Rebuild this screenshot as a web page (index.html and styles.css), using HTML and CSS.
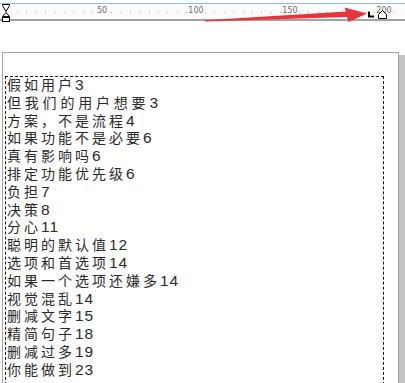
FILE: index.html
```html
<!DOCTYPE html>
<html>
<head>
<meta charset="utf-8">
<link rel="stylesheet" href="styles.css">
</head>
<body>
<div class="ruler">
  <svg class="indent" width="10" height="19" viewBox="0 0 10 19">
    <path d="M1.5 0.5 H8.5 V1.5 L5 7.5 L1.5 1.5 Z" fill="#fff" stroke="#000"/>
    <path d="M5 8.5 L8.5 12.5 H1.5 Z" fill="#fff" stroke="#000"/>
    <rect x="1.5" y="13.5" width="7" height="4" fill="#fff" stroke="#000"/>
  </svg>
  <div class="scale">
    <div class="seg"><span class="num">50</span></div>
    <div class="seg"><span class="num">100</span></div>
    <div class="seg"><span class="num">150</span></div>
    <div class="seg"><span class="num">200</span></div>
  </div>
  <svg class="marks" width="405" height="24" viewBox="0 0 405 24">
    <polygon points="205,20.3 346,11.6 344.5,7.5 367,13.6 348.5,22 347,17 205,21.6" fill="#e8343a"/>
    <path d="M369 11.5 V16.5 H374" fill="none" stroke="#000" stroke-width="2"/>
    <path d="M378.5 18.5 V14.5 L382.5 10.5 L386.5 14.5 V18.5 Z" fill="#fff" stroke="#000"/>
  </svg>
</div>
<div class="page">
  <div class="textbox">
    <p class="line">假如用户<span class="pg">3</span></p>
    <p class="line wide">但我们的用户想要<span class="pg">3</span></p>
    <p class="line">方案，不是流程<span class="pg">4</span></p>
    <p class="line">如果功能不是必要<span class="pg">6</span></p>
    <p class="line">真有影响吗<span class="pg">6</span></p>
    <p class="line">排定功能优先级<span class="pg">6</span></p>
    <p class="line">负担<span class="pg">7</span></p>
    <p class="line">决策<span class="pg">8</span></p>
    <p class="line">分心<span class="pg">11</span></p>
    <p class="line">聪明的默认值<span class="pg">12</span></p>
    <p class="line">选项和首选项<span class="pg">14</span></p>
    <p class="line">如果一个选项还嫌多<span class="pg">14</span></p>
    <p class="line">视觉混乱<span class="pg">14</span></p>
    <p class="line">删减文字<span class="pg">15</span></p>
    <p class="line">精简句子<span class="pg">18</span></p>
    <p class="line">删减过多<span class="pg">19</span></p>
    <p class="line">你能做到<span class="pg">23</span></p>
  </div>
</div>
</body>
</html>
```
FILE: styles.css
```css
html, body {
  margin: 0;
  padding: 0;
  background: #ffffff;
  overflow: hidden;
}
body {
  width: 405px;
  height: 383px;
  font-family: "Liberation Sans", "Noto Sans CJK SC", sans-serif;
}
.ruler {
  position: relative;
  margin-top: 3px;
  height: 15px;
  border-top: 1px solid #8cc0d8;
  border-bottom: 2px solid #a2a2a2;
  background-color: #fcfcfc;
  background-image: repeating-linear-gradient(to right, #a8a8a8 0 1px, transparent 1px 9.4px);
  background-size: 380px 1px;
  background-position: 17px 8px;
  background-repeat: no-repeat;
}
.indent {
  position: absolute;
  left: 1px;
  top: 0;
}
.scale {
  display: flex;
  padding-left: 8px;
}
.seg {
  width: 94px;
  height: 15px;
  display: flex;
  justify-content: flex-end;
}
.num {
  font-family: "DejaVu Sans", sans-serif;
  font-size: 8px;
  line-height: 8px;
  color: #6a6a6a;
  margin-top: 3px;
  transform: translateX(50%);
  background: #fcfcfc;
  padding: 0 1px;
}
.marks {
  position: absolute;
  left: 0;
  top: -4px;
}
.page {
  margin: 31px 0 0 2px;
  width: 395px;
  height: 400px;
  border: 1px solid #a6a6a6;
  border-bottom: none;
  padding-top: 23px;
  box-shadow: 7px 3px 0 #c3c3c3;
}
.textbox {
  margin-left: 2px;
  width: 376px;
  border: 1px dashed #111;
  border-bottom: none;
  padding: 0 0 20px 1px;
}
.line {
  margin: 0;
  height: 17.8px;
  font-size: 14px;
  line-height: 17.8px;
  letter-spacing: 3px;
  color: #2a2a2a;
  white-space: nowrap;
}
.line.wide {
  letter-spacing: 3.8px;
}
.pg {
  font-size: 15.5px;
  line-height: 10px;
  letter-spacing: 1px;
}
```
